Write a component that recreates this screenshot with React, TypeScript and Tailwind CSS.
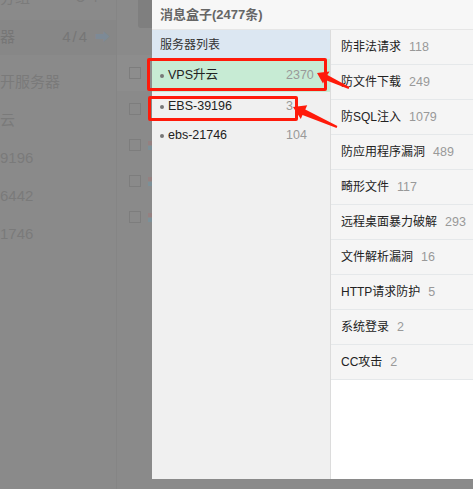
import React from 'react';

const FONT = { fontFamily: '"Liberation Sans", "Noto Sans CJK SC", sans-serif' };

const servers = [
  { name: 'VPS升云', count: 2370, active: true },
  { name: 'EBS-39196', count: 3 },
  { name: 'ebs-21746', count: 104 },
];

const categories: [string, number][] = [
  ['防非法请求', 118],
  ['防文件下载', 249],
  ['防SQL注入', 1079],
  ['防应用程序漏洞', 489],
  ['畸形文件', 117],
  ['远程桌面暴力破解', 293],
  ['文件解析漏洞', 16],
  ['HTTP请求防护', 5],
  ['系统登录', 2],
  ['CC攻击', 2],
];

const bgRows = ['开服务器', '云', '9196', '6442', '1746'];

function Backdrop() {
  return (
    <div className="flex h-full">
      {/* dimmed sidebar */}
      <div className="w-[117px] border-r border-[#858585] flex flex-col overflow-hidden">
        <div className="h-[20px] flex items-start pr-[16px] text-[15px] text-[#7b7b7b] leading-none overflow-hidden">
          <span className="-mt-[10px]">分组</span>
          <span className="ml-auto -mt-[10px]">↻ +</span>
        </div>
        <div className="h-[35px] flex items-center bg-[#878787] pr-[6px] text-[15px] text-[#767676]">
          <span>器</span>
          <span className="ml-auto tracking-[2px]">4/4</span>
          <span className="ml-[6px] text-[#7d8a96]">➡</span>
        </div>
        <div className="flex flex-col pt-[8px]">
          {bgRows.map(r => (
            <div key={r} className="h-[38px] flex items-center text-[15px] text-[#7a7a7a]">
              {r}
            </div>
          ))}
        </div>
      </div>
      {/* dimmed checkbox column */}
      <div className="w-[35px] flex flex-col">
        <div className="h-[28px] flex justify-end">
          <div className="w-[14px] h-[28px] bg-[#7f7f7f] rounded-bl-[3px]" />
        </div>
        <div className="h-[27px]" />
        {[0, 1, 2, 3, 4].map(i => (
          <div
            key={i}
            className={`h-[36px] flex items-center pl-[12px] ${i === 0 ? 'bg-[#8d8d8d]' : ''}`}
          >
            <div className="w-[12px] h-[12px] border border-[#7d7d7d]" />
            {i > 1 && (
              <div className="ml-auto mr-0 flex flex-col gap-[1px]">
                <span className="w-[4px] h-[4px] bg-[#958080]" />
                <span className="w-[4px] h-[4px] bg-[#7c9098]" />
              </div>
            )}
          </div>
        ))}
      </div>
    </div>
  );
}

export default function App() {
  return (
    <div className="relative w-[473px] h-[489px] overflow-hidden bg-[#8a8a8a]" style={FONT}>
      <Backdrop />

      {/* modal */}
      <div className="absolute left-[152px] top-0 w-[360px] h-[479px] flex flex-col bg-white">
        <div className="h-[30px] shrink-0 flex items-center px-[8px] bg-[#f7f7f7] border-b border-[#e6e6e6] text-[13px] font-bold text-[#666]">
          消息盒子(2477条)
        </div>
        <div className="flex flex-1 min-h-0">
          <div className="w-[179px] shrink-0 bg-[#f0f0f0] border-r border-[#dcdcdc] flex flex-col">
            <div className="h-[29px] flex items-center px-[8px] bg-[#dce7f2] text-[12px] text-[#333]">
              服务器列表
            </div>
            {servers.map(s => (
              <div
                key={s.name}
                className={`flex items-center pl-[8px] text-[12.5px] ${s.active ? 'h-[33px] bg-[#c7ebd4]' : 'h-[29px]'}`}
              >
                <span className="w-[4px] h-[4px] rounded-full bg-[#777] mr-[4px]" />
                <span className="w-[118px] text-[#222]">{s.name}</span>
                <span className="text-[#999]">{s.count}</span>
              </div>
            ))}
          </div>
          <div className="flex-1 flex flex-col bg-white">
            {categories.map(([label, n]) => (
              <div
                key={label}
                className="h-[35px] flex items-center pl-[10px] bg-[#f5f5f5] border-b border-[#e5e8ea] text-[12px]"
              >
                <span className="text-[#222]">{label}</span>
                <span className="ml-[8px] text-[12.5px] text-[#999]">{n}</span>
              </div>
            ))}
          </div>
        </div>
      </div>

      {/* annotations */}
      <div className="absolute left-[147px] top-[58px] w-[180px] h-[33px] border-[3px] border-[#ff1a0a] rounded-[2px]" />
      <div className="absolute left-[148px] top-[96px] w-[150px] h-[25px] border-[3px] border-[#ff1a0a] rounded-[2px]" />
      <svg className="absolute left-0 top-0" width="473" height="489" viewBox="0 0 473 489">
        <polygon
          fill="#ff1a0a"
          points="317,73 329.5,71.5 327.4,75 349.4,87.1 348.6,88.9 324.8,79.8 323,83.5"
        />
        <polygon
          fill="#ff1a0a"
          points="293,107 307.2,105.2 305.3,109.5 337.4,126.1 336.6,127.9 302.5,115 300.8,119"
        />
      </svg>
    </div>
  );
}
